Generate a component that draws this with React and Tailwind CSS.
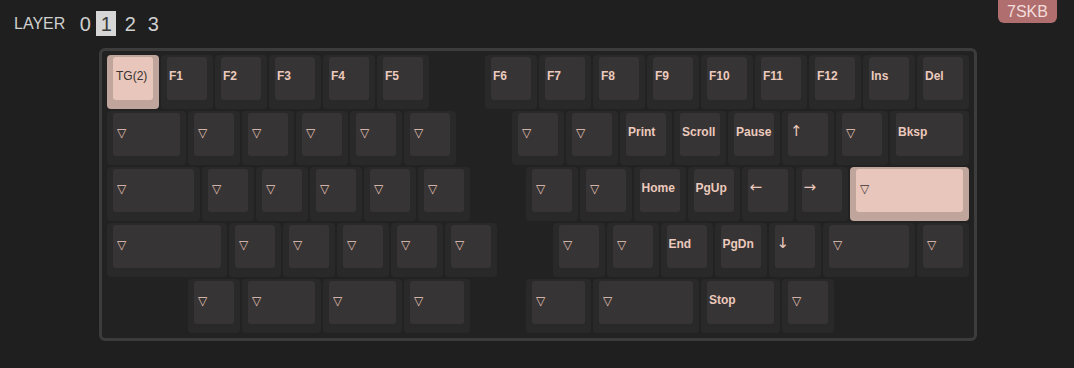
import React from 'react';

const W = {
  1: 'w-[52px]',
  1.25: 'w-[65.5px]',
  1.5: 'w-[79px]',
  1.75: 'w-[92.5px]',
  2: 'w-[106px]',
  2.25: 'w-[119.5px]',
};

const GAP = {
  1: 'w-[54px]',
  1.5: 'w-[81px]',
};

const T = '▽';

// [label, width in units, highlighted]; { gap: u } for empty space
const rows = [
  [
    ['TG(2)', 1, true], ['F1'], ['F2'], ['F3'], ['F4'], ['F5'], { gap: 1 },
    ['F6'], ['F7'], ['F8'], ['F9'], ['F10'], ['F11'], ['F12'], ['Ins'], ['Del'],
  ],
  [
    [T, 1.5], [T], [T], [T], [T], [T], { gap: 1 },
    [T], [T], ['Print'], ['Scroll'], ['Pause'], ['↑'], [T], ['Bksp', 1.5],
  ],
  [
    [T, 1.75], [T], [T], [T], [T], [T], { gap: 1 },
    [T], [T], ['Home'], ['PgUp'], ['←'], ['→'], [T, 2.25, true],
  ],
  [
    [T, 2.25], [T], [T], [T], [T], [T], { gap: 1 },
    [T], [T], ['End'], ['PgDn'], ['↓'], [T, 1.75], [T],
  ],
  [
    { gap: 1.5 }, [T], [T, 1.5], [T, 1.5], [T, 1.25], { gap: 1 },
    [T, 1.25], [T, 2], ['Stop', 1.5], [T],
  ],
];

const arrows = ['↑', '↓', '←', '→'];

const labelClass = (label) => {
  if (label === T) return 'pl-[4px] pt-[13px] text-[12px] font-normal';
  if (arrows.includes(label)) return "pl-[2px] pt-[11px] text-[15px] font-normal font-['DejaVu_Sans']";
  if (label === 'TG(2)') return 'pl-[3px] pt-[12px] text-[12px] font-normal';
  return 'pl-[2px] pt-[12px] text-[12px] font-bold';
};

const Key = ({ label, u = 1, hl = false }) => (
  <div
    className={`h-[54px] mr-[2px] shrink-0 rounded-[4px] pt-[2px] px-[6px] pb-[9px] ${W[u]} ${
      hl ? 'bg-[#bfa59b]' : 'bg-[#2a2929]'
    }`}
  >
    <div
      className={`h-full rounded-[3px] leading-[14px] whitespace-nowrap ${labelClass(label)} ${
        hl ? 'bg-[#e8c6bb] text-[#3a3232]' : 'bg-[#363434] text-[#ecc9bd]'
      }`}
    >
      {label}
    </div>
  </div>
);

const layers = [
  { n: '0', cls: 'mr-[1px]' },
  { n: '1', cls: 'mr-[4px] bg-[#d6d6d6] text-[#3a3a3a]' },
  { n: '2', cls: 'mr-[3px]' },
  { n: '3', cls: '' },
];

export default function App() {
  return (
    <div className="min-h-screen bg-[#1f1f1f] font-['Liberation_Sans',Arial,sans-serif]">
      <div className="flex items-start justify-between">
        <div className="flex items-center mt-[11px] ml-[14px] h-[25px] text-[#cfcfcf]">
          <span className="text-[16px] mr-[10px] leading-none">LAYER</span>
          {layers.map((l) => (
            <span
              key={l.n}
              className={`h-[25px] w-[20px] flex items-center justify-center text-[20px] leading-none ${l.cls}`}
            >
              {l.n}
            </span>
          ))}
        </div>
        <div className="mr-[17px] h-[23px] w-[59px] rounded-b-[6px] bg-[#b06e6e] text-[#f3dcdc] text-[16px] leading-[23px] text-center">
          7SKB
        </div>
      </div>

      <div className="ml-[99px] mt-[12px] w-[878px] rounded-[6px] border-[3px] border-[#3c3c3c] bg-[#222222] pl-[5px] pr-[3px] pt-[4px] pb-[3px]">
        {rows.map((row, i) => (
          <div key={i} className="flex mb-[2px]">
            {row.map((k, j) =>
              k.gap ? (
                <div key={j} className={`shrink-0 ${GAP[k.gap]}`} />
              ) : (
                <Key key={j} label={k[0]} u={k[1] || 1} hl={k[2]} />
              )
            )}
          </div>
        ))}
      </div>
    </div>
  );
}
